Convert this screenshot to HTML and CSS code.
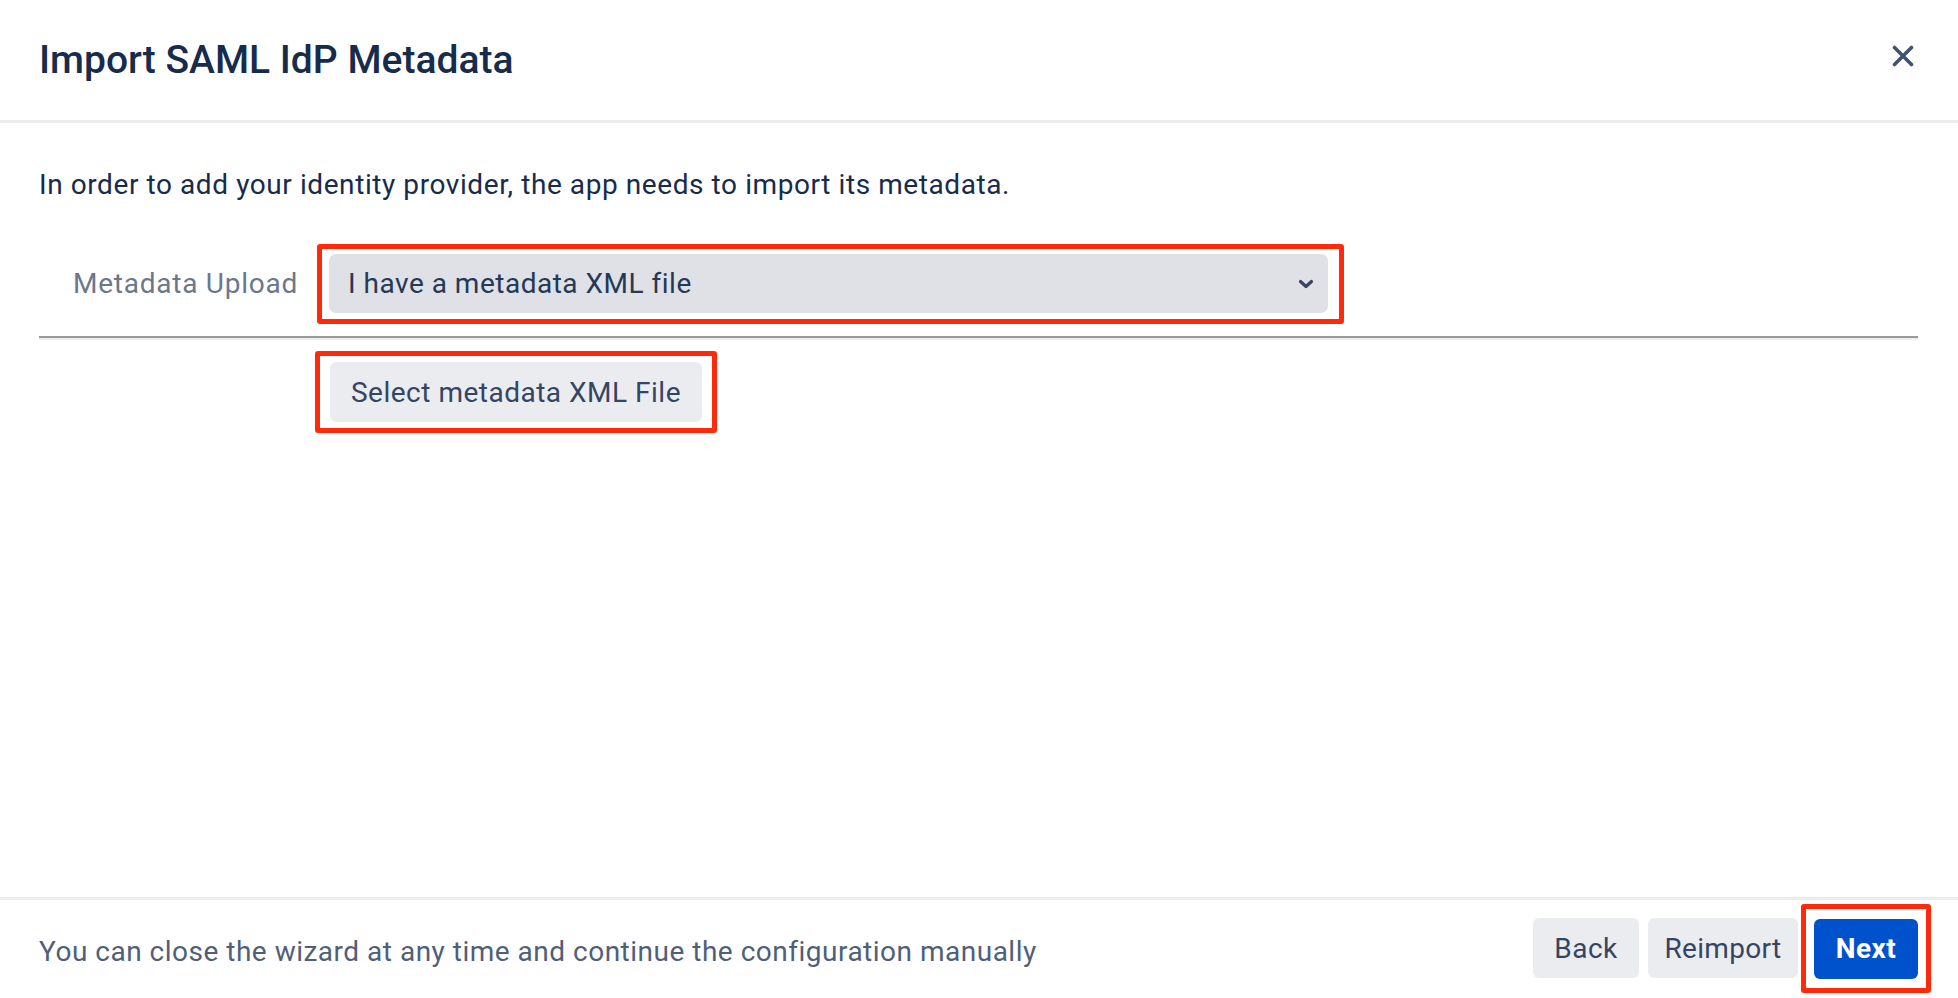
FILE: index.html
```html
<!DOCTYPE html>
<html lang="en">

<head>
    <meta charset="UTF-8">
    <meta name="viewport" content="width=device-width, initial-scale=1.0">
    <title>Import SAML IdP Metadata</title>
    <link rel="stylesheet" href="styles.css">
</head>

<body>
    <div id="wizardDialog">
        <div class="dialog-header">
            <h1>Import SAML IdP Metadata</h1>
            <button type="button" class="close-button" aria-label="Close">
                <svg width="22" height="22" viewBox="0 0 22 22">
                    <path d="M2.5 2.5 L19.5 19.5 M19.5 2.5 L2.5 19.5" stroke="#42526e" stroke-width="3.6" stroke-linecap="round" fill="none"/>
                </svg>
            </button>
        </div>

        <div class="dialog-body">
            <p class="intro">In order to add your identity provider, the app needs to import its metadata.</p>

            <div class="field-row">
                <label for="metadataUpload">Metadata Upload</label>
                <div class="marker marker-select">
                    <div class="select-box" id="metadataUpload">
                        <span>I have a metadata XML file</span>
                        <svg width="16" height="10" viewBox="0 0 16 10">
                            <path d="M2.5 2.5 L8 7.5 L13.5 2.5" stroke="#344563" stroke-width="3.2" stroke-linecap="round" stroke-linejoin="round" fill="none"/>
                        </svg>
                    </div>
                </div>
            </div>

            <hr>

            <div class="marker marker-file">
                <button type="button" class="button">Select metadata XML File</button>
            </div>
        </div>

        <div class="dialog-footer">
            <span class="footer-hint">You can close the wizard at any time and continue the configuration manually</span>
            <div class="footer-actions">
                <button type="button" class="button back">Back</button>
                <button type="button" class="button reimport">Reimport</button>
                <div class="marker marker-next">
                    <button type="button" class="button primary">Next</button>
                </div>
            </div>
        </div>
    </div>
</body>

</html>
```

FILE: styles.css
```css
body {
    margin: 0;
    padding: 0;
    background-color: #ffffff;
    font-family: 'Roboto', 'Inter', sans-serif;
    letter-spacing: 0.5px;
    color: #172b4d;
}

#wizardDialog {
    height: 100vh;
    display: flex;
    flex-direction: column;
    background-color: #ffffff;
}

.dialog-header {
    height: 120px;
    display: flex;
    align-items: center;
    justify-content: space-between;
    padding: 0 40px 0 39px;
    border-bottom: 3px solid #ebecf0;
}

h1 {
    margin: 0;
    font-size: 39px;
    font-weight: 500;
    letter-spacing: 0;
    color: #172b4d;
}

.close-button {
    background: none;
    border: none;
    padding: 0;
    width: 30px;
    height: 30px;
    display: flex;
    align-items: center;
    justify-content: center;
    margin-top: -8px;
    cursor: pointer;
}

.dialog-body {
    flex: 1;
    padding: 42px 40px 0 39px;
}

.intro {
    margin: 0;
    font-size: 28px;
    line-height: 40px;
    letter-spacing: 0.58px;
}

.field-row {
    display: grid;
    grid-template-columns: 259px auto;
    column-gap: 19px;
    align-items: center;
    margin-top: 39px;
}

label {
    text-align: right;
    font-size: 28px;
    letter-spacing: 0.75px;
    color: #6b778c;
    padding-bottom: 2px;
}

/* red annotation frames */
.marker {
    border: 5px solid #ff2a0a;
    border-radius: 3px;
}

.marker-select {
    width: 1027px;
    box-sizing: border-box;
    padding: 5px 11px 6px 7px;
}

.select-box {
    height: 59px;
    box-sizing: border-box;
    background-color: #dfe1e6;
    border-radius: 7px;
    display: flex;
    align-items: center;
    justify-content: space-between;
    padding: 0 14px 0 19px;
    font-size: 28px;
    color: #253858;
}

hr {
    margin: 12px 0 0 0;
    border: none;
    border-top: 2px solid #9a9a9a;
    border-bottom: 2px solid #eeeeee;
}

.marker-file {
    display: inline-block;
    margin: 11px 0 0 276px;
    padding: 6px 10px;
}

.button {
    height: 60px;
    padding: 0;
    font-family: inherit;
    font-size: 28px;
    letter-spacing: 0.5px;
    color: #344563;
    background-color: #ebecf0;
    border: none;
    border-radius: 6px;
    cursor: pointer;
}

.marker-file .button {
    width: 372px;
}

.dialog-footer {
    height: 98px;
    display: flex;
    align-items: center;
    justify-content: space-between;
    padding: 0 27px 0 39px;
    border-top: 3px solid #ebecf0;
}

.footer-hint {
    font-size: 28px;
    color: #505f79;
    padding-top: 4px;
}

.footer-actions {
    display: flex;
    align-items: center;
    gap: 9px;
    margin-top: -2px;
}

.button.back {
    width: 106px;
}

.button.reimport {
    width: 150px;
    letter-spacing: 0.3px;
}

.marker-next {
    margin-left: -6px;
    padding: 10px 8px 9px;
}

.button.primary {
    display: block;
    width: 104px;
    background-color: #0052cc;
    color: #ffffff;
    font-weight: 700;
}
```
